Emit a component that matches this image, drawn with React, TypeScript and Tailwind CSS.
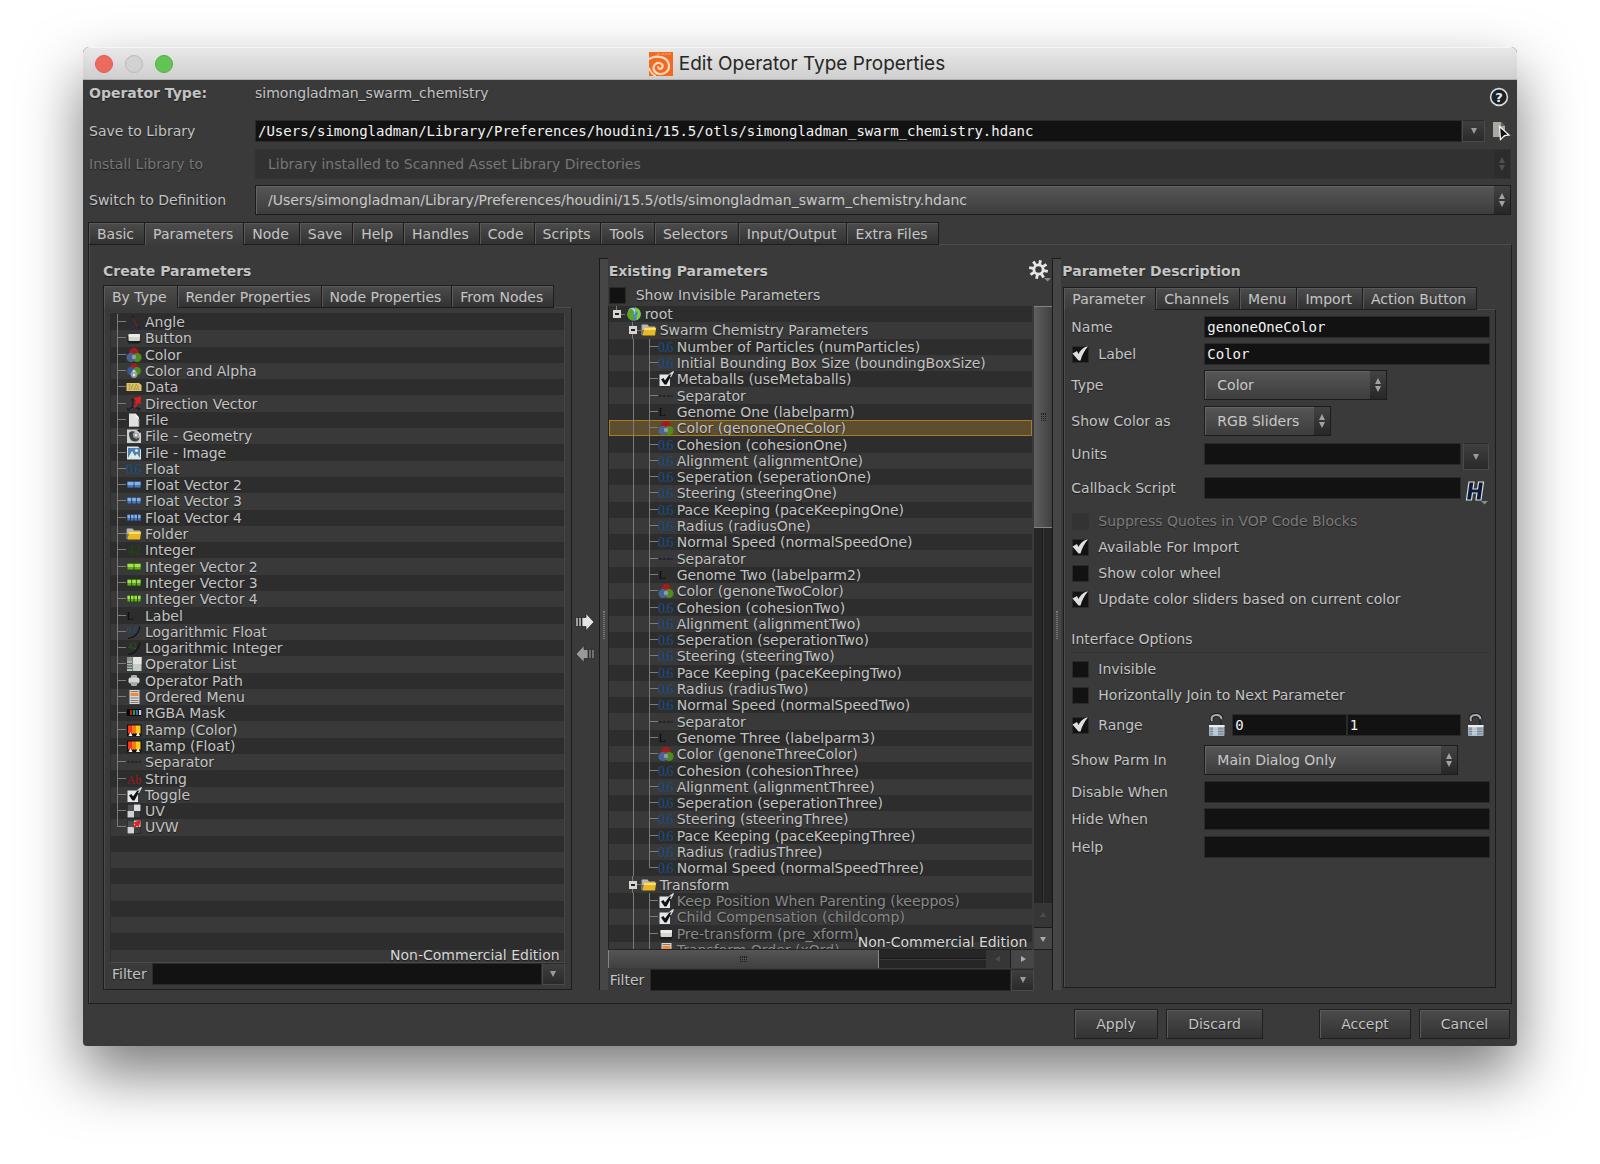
import { useState, type ReactNode } from "react";

type IconName =
  | "angle" | "button" | "color" | "colorAlpha" | "data" | "direction" | "file" | "geometry" | "image"
  | "float" | "float2" | "float3" | "float4" | "folder" | "integer" | "int2" | "int3" | "int4" | "label"
  | "logFloat" | "logInt" | "opList" | "opPath" | "menu" | "rgba" | "ramp" | "separator" | "string"
  | "toggle" | "uv" | "uvw" | "globe";

const serif = "'Liberation Serif', serif";

function cells(count: number, dark: string, mid: string, light: string) {
  const w = 14 / count;
  return (
    <>
      <rect x="1" y="4" width="14" height="7" fill={dark} />
      {Array.from({ length: count }, (_, i) => (
        <g key={i}>
          <rect x={1.5 + i * w} y="4.5" width={w - 1} height="6" fill={mid} />
          <rect x={1.5 + i * w} y="5" width={w - 1} height="3" fill={light} />
        </g>
      ))}
    </>
  );
}

const checkMark = (
  <>
    <rect x="1.5" y="3.5" width="10.5" height="11.5" fill="#e4e6e8" />
    <path d="M3 8.5 L5.5 7 L7 9.5 L12.5 2 L15.5 0.5 L8.5 13.5 L6.5 13.5 Z" fill="#0c1114" />
    <path d="M11.5 3.5 L15.5 0.5 L12.5 6" fill="none" stroke="#dfe3e6" strokeWidth="1.2" />
  </>
);

const checker = (
  <>
    <rect x="1" y="1" width="14" height="14" fill="#16191c" />
    <rect x="1.5" y="1.5" width="6.5" height="6.5" fill="#4b5155" />
    <rect x="8" y="1.5" width="6.5" height="6.5" fill="#dedede" />
    <rect x="1.5" y="8" width="6.5" height="6.5" fill="#d2d2d2" />
    <rect x="8" y="8" width="6.5" height="6.5" fill="#3a3f43" />
  </>
);

const iconArt: Record<IconName, ReactNode> = {
  angle: (
    <>
      <path d="M2 13.5 L6.5 3" stroke="#29294c" strokeWidth="1.2" />
      <path d="M6.5 3.5 L11.5 13" stroke="#7c1f1f" strokeWidth="1.3" />
      <path d="M1.5 13.5 H12" stroke="#29294c" strokeWidth="1.2" strokeDasharray="2 1.5" />
      <path d="M5 4 L7 1 L8.5 4.5 Z M12 11 L15.5 13.5 L12 15.5 Z" fill="#23234a" />
    </>
  ),
  button: (
    <>
      <rect x="1.5" y="4.5" width="13" height="9" rx="2" fill="#1b1b1b" />
      <rect x="2.5" y="4" width="11.5" height="7" rx="1" fill="#d5d5cf" />
      <rect x="2.5" y="4" width="11.5" height="3" rx="1" fill="#ececea" />
    </>
  ),
  color: (
    <>
      <circle cx="8" cy="5.5" r="4.7" fill="#a11d1d" />
      <circle cx="11" cy="10.5" r="4.6" fill="#4e8c1e" />
      <circle cx="5" cy="10.5" r="4.6" fill="#47689c" fillOpacity="0.92" />
      <circle cx="8" cy="10" r="2.2" fill="#a5b3b8" fillOpacity="0.7" />
    </>
  ),
  colorAlpha: (
    <>
      <circle cx="8" cy="4.5" r="4" fill="#a11d1d" />
      <circle cx="11" cy="8" r="3.9" fill="#4e8c1e" />
      <circle cx="5" cy="8" r="3.9" fill="#34588f" />
      <circle cx="8" cy="11.5" r="3.4" fill="#8f9c9f" />
      <circle cx="8" cy="8" r="1.6" fill="#c3cdd1" />
      <circle cx="8" cy="12" r="1.3" fill="#e6eaec" />
    </>
  ),
  data: (
    <>
      <path d="M0.5 4 H13 L15.5 6 V12 H0.5 Z" fill="#dcc566" />
      <path d="M2.5 6 H5 M6 6 H8 M9.5 6 H12 M3 8 H7 M8.5 8 H10 M11 8 H13 M2.5 10 H6 M7.5 10 H13" stroke="#8d792c" strokeWidth="1" strokeDasharray="1.5 .7" />
    </>
  ),
  direction: (
    <>
      <path d="M6.5 11 V3 M6.5 11 L1.5 14 M6.5 11 L14 13" stroke="#1d1d33" strokeWidth="1.4" fill="none" />
      <path d="M5 4.5 L6.5 1.5 L8 4.5 Z M1 11.5 L1 15 L4.5 14.5 Z M12 11 L15 13.5 L11.5 15 Z" fill="#1d1d33" />
      <path d="M8 11.5 L11.5 7.5" stroke="#c3201d" strokeWidth="2.2" />
      <path d="M7.5 2 L15 0.5 L14.5 8.5 L12.5 7 L10.5 8.5 L8.5 6.5 L10 4.5 Z" fill="#de1f1f" />
    </>
  ),
  file: (
    <>
      <path d="M3 1.5 H9.5 L13 5.5 V15 H3 Z" fill="#dfe0e0" />
      <path d="M9.5 1.5 L13 5.5 H9.5 Z" fill="#f7f7f7" />
      <path d="M3.5 14.5 H12.8 V7" fill="none" stroke="#a3a5a5" />
    </>
  ),
  geometry: (
    <>
      <path d="M1 1.5 H12 L15 4.5 V15 H1 Z" fill="#cfd0d0" />
      <path d="M3 5 C3 10 5 13.5 9 13.5 C12 13.5 13.5 11.5 13.5 9 C12 11 8 11 7 8 C6.5 5.5 8 4 10 4 C7 2.5 4 3 3 5 Z" fill="#3a3f42" />
      <circle cx="10" cy="7.5" r="2.8" fill="#8a8f92" />
      <circle cx="10" cy="7" r="1.5" fill="#e7e9ea" />
      <path d="M10.5 2 L14.5 2 L14.5 5.5 Z" fill="#222" />
    </>
  ),
  image: (
    <>
      <path d="M1 1.5 H12 L15 4.5 V14.5 H1 Z" fill="#d8e2ea" />
      <rect x="2" y="3" width="12" height="10" fill="#4d7fb4" />
      <path d="M2 13 L6 6 L9 11 L11 8.5 L14 13 Z" fill="#dcebd9" />
      <circle cx="10.5" cy="5.5" r="1.5" fill="#ecf4fa" />
    </>
  ),
  float: (
    <text x="0 6 8.5" y="12.5" fontSize="14" fontFamily={serif} fill="#184e88">0.6</text>
  ),
  float2: cells(2, "#1e3a60", "#4878ba", "#88afe0"),
  float3: cells(3, "#1e3a60", "#4878ba", "#88afe0"),
  float4: cells(4, "#1e3a60", "#4878ba", "#88afe0"),
  folder: (
    <>
      <path d="M1 2.5 H6.5 L8 4.5 H14 V8 H1 Z" fill="#b9b9b5" />
      <path d="M1 3 V13" stroke="#a8a8a4" />
      <path d="M3 5.5 H15.2 L14 13.5 H1.5 Z" fill="#e8b923" />
      <path d="M3.3 6 H14.8 L14.5 8 H3 Z" fill="#ffe066" />
    </>
  ),
  integer: (
    <text x="1" y="12.5" fontSize="14" fontWeight="bold" fontFamily={serif} fill="#23401a">42</text>
  ),
  int2: cells(2, "#234a0c", "#5fb01c", "#a2e04d"),
  int3: cells(3, "#234a0c", "#5fb01c", "#a2e04d"),
  int4: cells(4, "#234a0c", "#5fb01c", "#a2e04d"),
  label: (
    <text x="0.5" y="12" fontSize="12" fontFamily={serif} fill="#0b0b0b">L</text>
  ),
  logFloat: (
    <>
      <text x="1" y="8.5" fontSize="9" fontFamily={serif} fill="#1a5390">0.6</text>
      <path d="M2 14.5 C9 14 12.5 9 14 2.5" fill="none" stroke="#151515" strokeWidth="1.2" />
    </>
  ),
  logInt: (
    <>
      <text x="2" y="8.5" fontSize="9" fontFamily={serif} fill="#2a5a1c">42</text>
      <path d="M2 14.5 C9 14 12.5 9 14 2.5" fill="none" stroke="#151515" strokeWidth="1.2" />
    </>
  ),
  opList: (
    <>
      <rect x="1" y="1" width="14.5" height="14" fill="#c4cfc6" />
      <rect x="7" y="1" width="8.5" height="7" fill="#e2e6e2" />
      <rect x="1" y="1" width="5" height="4.5" fill="#8c938d" />
      <path d="M1 7.5 H6 M1 10 H6 M1 12.5 H6" stroke="#5c635d" strokeWidth="1.4" />
      <path d="M6.5 1 V15" stroke="#777d78" />
    </>
  ),
  opPath: (
    <>
      <rect x="5" y="2" width="6" height="11" rx="1" fill="#a9ada9" />
      <rect x="2.5" y="4.5" width="11" height="6" rx="2" fill="#d4d7d4" />
      <path d="M3.5 10 H12.5" stroke="#888c89" />
    </>
  ),
  menu: (
    <>
      <rect x="3.5" y="1" width="10" height="14" fill="#d8d8d8" />
      <rect x="4.5" y="3.8" width="8" height="3.2" fill="#f08a34" />
      <path d="M4.5 2.5 H12.5 M4.5 9 H12.5 M4.5 11.5 H12.5 M4.5 13.5 H12.5" stroke="#7c7c7c" />
    </>
  ),
  rgba: (
    <>
      <rect x="1" y="4" width="14.5" height="7" fill="#050505" />
      <rect x="4" y="5" width="2.2" height="5" fill="#c22323" />
      <rect x="7" y="5" width="2.2" height="5" fill="#2f9a2f" />
      <rect x="10" y="5" width="2.2" height="5" fill="#3a62c4" />
      <rect x="13" y="5" width="2.2" height="5" fill="#cfd2d4" />
    </>
  ),
  ramp: (
    <>
      <rect x="1" y="2.5" width="14.5" height="12" fill="#0f0f0f" />
      <rect x="2" y="3.5" width="5" height="8" fill="#f4371c" />
      <rect x="6" y="3.5" width="4" height="8" fill="#fb7a12" />
      <rect x="10" y="3.5" width="4.5" height="8" fill="#fdc91a" />
      <path d="M2.5 14 L4.5 10 L6.5 14 Z M10 14 L12 10 L14 14 Z" fill="#f2f2f2" />
    </>
  ),
  separator: <path d="M1 8 H15" stroke="#1f1f2c" strokeWidth="1.4" strokeDasharray="3 1" />,
  string: (
    <text x="0.5" y="12.5" fontSize="12" fontFamily={serif} fill="#a0161a">Ab</text>
  ),
  toggle: checkMark,
  uv: checker,
  uvw: (
    <>
      {checker}
      <path d="M7 3.5 L14.5 1 L13 8.5 L11 6.8 L8.5 9.5 L7 8 L9.3 5.2 Z" fill="#e02222" />
    </>
  ),
  globe: (
    <>
      <circle cx="8" cy="8" r="6.8" fill="#3f8ccb" />
      <circle cx="6" cy="5.5" r="3.4" fill="#b7dcf3" />
      <path d="M2.5 4.5 C4 3 5 2.5 6 3 L8.5 6 L8 8.5 L6.5 9 L8.5 12 L7 14.7 C3 14 1.2 11 1.2 8 Z" fill="#5fa31f" />
      <path d="M9 1.5 C13 2.5 14.8 5 14.8 8.5 C14.5 12 12 14 10.5 14.3 L10.5 10 L12 7 L9.5 4.5 Z" fill="#86cc35" />
    </>
  ),
};

function Icon({ name }: { name: IconName }) {
  return (
    <svg viewBox="0 0 16 16" className="h-4 w-4 shrink-0 [text-shadow:none]" fill="none" aria-hidden="true">
      {iconArt[name]}
    </svg>
  );
}

const createTypes: [IconName, string][] = [
  ["angle", "Angle"], ["button", "Button"], ["color", "Color"], ["colorAlpha", "Color and Alpha"],
  ["data", "Data"], ["direction", "Direction Vector"], ["file", "File"], ["geometry", "File - Geometry"],
  ["image", "File - Image"], ["float", "Float"], ["float2", "Float Vector 2"], ["float3", "Float Vector 3"],
  ["float4", "Float Vector 4"], ["folder", "Folder"], ["integer", "Integer"], ["int2", "Integer Vector 2"],
  ["int3", "Integer Vector 3"], ["int4", "Integer Vector 4"], ["label", "Label"],
  ["logFloat", "Logarithmic Float"], ["logInt", "Logarithmic Integer"], ["opList", "Operator List"],
  ["opPath", "Operator Path"], ["menu", "Ordered Menu"], ["rgba", "RGBA Mask"], ["ramp", "Ramp (Color)"],
  ["ramp", "Ramp (Float)"], ["separator", "Separator"], ["string", "String"], ["toggle", "Toggle"],
  ["uv", "UV"], ["uvw", "UVW"],
];

type Node = { depth: 0 | 1 | 2; icon: IconName; text: string; dim?: boolean; last?: boolean };

function genome(n: string, label: string): Node[] {
  const items: [IconName, string][] = [
    ["separator", "Separator"],
    ["label", `Genome ${n} (${label})`],
    ["color", `Color (genone${n}Color)`],
    ["float", `Cohesion (cohesion${n})`],
    ["float", `Alignment (alignment${n})`],
    ["float", `Seperation (seperation${n})`],
    ["float", `Steering (steering${n})`],
    ["float", `Pace Keeping (paceKeeping${n})`],
    ["float", `Radius (radius${n})`],
    ["float", `Normal Speed (normalSpeed${n})`],
  ];
  return items.map(([icon, text], i) => ({ depth: 2, icon, text, last: n === "Three" && i === 9 }));
}

const existing: Node[] = [
  { depth: 0, icon: "globe", text: "root" },
  { depth: 1, icon: "folder", text: "Swarm Chemistry Parameters" },
  { depth: 2, icon: "float", text: "Number of Particles (numParticles)" },
  { depth: 2, icon: "float", text: "Initial Bounding Box Size (boundingBoxSize)" },
  { depth: 2, icon: "toggle", text: "Metaballs (useMetaballs)" },
  ...genome("One", "labelparm"),
  ...genome("Two", "labelparm2"),
  ...genome("Three", "labelparm3"),
  { depth: 1, icon: "folder", text: "Transform" },
  { depth: 2, icon: "toggle", text: "Keep Position When Parenting (keeppos)", dim: true },
  { depth: 2, icon: "toggle", text: "Child Compensation (childcomp)", dim: true },
  { depth: 2, icon: "button", text: "Pre-transform (pre_xform)", dim: true },
  { depth: 2, icon: "menu", text: "Transform Order (xOrd)", dim: true },
];

function Branch({ last }: { last?: boolean }) {
  return (
    <span className="flex h-full w-[9px] shrink-0 flex-col">
      <span className="h-1/2 border-b border-l border-[#7b7b7b]" />
      <span className={last ? "h-1/2" : "h-1/2 border-l border-[#7b7b7b]"} />
    </span>
  );
}

function Expander({ root }: { root?: boolean }) {
  return (
    <span className="flex h-full w-3 shrink-0 items-center">
      <span className="flex h-full w-2 flex-col items-center">
        <span className="w-px flex-1 bg-[#7b7b7b]" />
        <span className="flex h-2 w-2 items-center justify-center bg-[#d6d6d0]">
          <span className="h-0.5 w-1 bg-[#222]" />
        </span>
        <span className={root ? "w-px flex-1" : "w-px flex-1 bg-[#7b7b7b]"} />
      </span>
      <span className="h-px w-1 bg-[#7b7b7b]" />
    </span>
  );
}

const rowShade = "odd:bg-[#2d2d2d] even:bg-[#393939]";

function ExistingRow({ node, selected, onSelect }: { node: Node; selected: boolean; onSelect: () => void }) {
  return (
    <li
      onClick={onSelect}
      className={`flex min-h-0 items-center whitespace-nowrap ${
        selected ? "bg-[#5e4e30] outline -outline-offset-1 outline-[#a87b26]" : rowShade
      }`}
    >
      {node.depth === 0 && <span className="w-1 shrink-0" />}
      {node.depth === 1 && <span className="w-5 shrink-0" />}
      {node.depth === 2 && (
        <>
          <span className="w-6 shrink-0" />
          <span className="h-full w-4 shrink-0 border-l border-[#7b7b7b]" />
        </>
      )}
      {node.depth === 2 ? <Branch last={node.last} /> : <Expander root={node.depth === 0} />}
      {node.depth === 0 && <span className="w-px shrink-0" />}
      <Icon name={node.icon} />
      <span className={`pl-[3px] leading-4 ${node.dim ? "text-[#8a8a8a]" : ""}`}>{node.text}</span>
    </li>
  );
}

function Tabs({ items, initial }: { items: string[]; initial: number }) {
  const [active, setActive] = useState(initial);
  return (
    <div role="tablist" className="relative z-10 -mb-px flex border-l border-[#1d1d1d]">
      {items.map((t, i) => (
        <button
          key={t}
          role="tab"
          aria-selected={i === active}
          onClick={() => setActive(i)}
          className={`h-[23px] whitespace-nowrap border-r border-t border-r-[#1d1d1d] border-t-[#1d1d1d] bg-linear-to-b pl-2 pr-[10px] leading-5 shadow-[inset_1px_1px_0_#595959] ${
            i === active
              ? "from-[#4c4c4c] to-[#3b3b3b]"
              : "border-b border-b-[#1d1d1d] from-[#4c4c4c] to-[#323232]"
          }`}
        >
          {t}
        </button>
      ))}
    </div>
  );
}

const frame = "border border-b-[#1d1d1d] border-l-[#1d1d1d] border-r-[#1d1d1d] border-t-[#4c4c4c] shadow-[inset_1px_0_0_#4c4c4c]";
const field =
  "h-[22px] min-w-0 bg-[#121212] px-[3px] leading-[22px] shadow-[inset_0_0_0_1px_#2a2a2a] font-['DejaVu_Sans_Mono',monospace] text-[14px] text-[#f2f2f2] outline-none";

function DropButton({ label, tall }: { label: string; tall?: boolean }) {
  return (
    <button
      aria-label={label}
      className={`flex shrink-0 items-center justify-center border border-[#4a4a4a] border-t-[#2a2a2a] bg-linear-to-b from-[#3f3f3f] to-[#2a2a2a] ${
        tall ? "h-[27px] w-[26px]" : "h-[22px] w-[23px]"
      }`}
    >
      <svg viewBox="0 0 8 8" className="h-2 w-2" aria-hidden="true">
        <path d="M1 1 H7 L4 7 Z" fill="#9a9a9a" />
      </svg>
    </button>
  );
}

function Select({ id, value, width, disabled }: { id: string; value: string; width: string; disabled?: boolean }) {
  return (
    <div className={`relative h-[30px] ${width}`}>
      <select
        id={id}
        disabled={disabled}
        className={`h-full w-full appearance-none truncate border pl-3 pr-6 outline-none ${
          disabled
            ? "border-[#333] bg-[#313131] text-[#777] opacity-100"
            : "border-[#1c1c1c] bg-linear-to-b from-[#565656] to-[#3d3d3d] text-[#c8c8c8] shadow-[inset_1px_1px_0_#646464]"
        }`}
      >
        <option>{value}</option>
      </select>
      <span
        className={`pointer-events-none absolute inset-y-px right-px flex w-4 items-center justify-center ${
          disabled ? "bg-[#2c2c2c]" : "bg-linear-to-b from-[#434343] to-[#272727]"
        }`}
      >
        <svg viewBox="0 0 8 16" className="h-4 w-2" aria-hidden="true">
          <path d="M4 1 L7 7 H1 Z M1 9 H7 L4 15 Z" fill={disabled ? "#505050" : "#a2a2a2"} />
        </svg>
      </span>
    </div>
  );
}

function Check({ id, label, checked, disabled }: { id: string; label: string; checked?: boolean; disabled?: boolean }) {
  return (
    <div className="flex items-center">
      <span className="grid h-[18px] w-[18px] shrink-0 place-items-center">
        <input
          id={id}
          type="checkbox"
          defaultChecked={checked}
          disabled={disabled}
          className="peer col-start-1 row-start-1 h-[17px] w-[17px] appearance-none border border-[#2a2a2a] bg-[#121212] disabled:border-[#343434] disabled:bg-[#333]"
        />
        <svg viewBox="0 0 18 18" className="pointer-events-none invisible col-start-1 row-start-1 h-[18px] w-[18px] peer-checked:visible" aria-hidden="true">
          <path d="M1.5 8.5 L6 6 L7.5 9 C9.5 5 12.5 2 17 1.5 C13.5 5.5 11 10 9.5 15.5 H7.5 Z" fill="#dedede" />
        </svg>
      </span>
      <label htmlFor={id} className={`whitespace-nowrap pl-[9px] ${disabled ? "text-[#7b7b7b]" : ""}`}>
        {label}
      </label>
    </div>
  );
}

function Row({ id, label, className, children }: { id: string; label: string; className?: string; children: ReactNode }) {
  return (
    <div className={`flex items-center ${className ?? ""}`}>
      <label htmlFor={id} className="w-[133px] shrink-0">{label}</label>
      {children}
    </div>
  );
}

function Splitter() {
  return (
    <div className="flex w-[9px] shrink-0 items-center justify-center border-l border-t border-[#1a1a1a] bg-[#464646]">
      <div className="h-7 w-0.5 border-x border-dotted border-[#777]" />
    </div>
  );
}

function Lock({ label }: { label: string }) {
  return (
    <button aria-label={label} className="shrink-0">
      <svg viewBox="0 0 18 24" className="h-6 w-[18px]" aria-hidden="true">
        <path d="M4 8 C2.5 4 5 2 8.5 2 C12 2 13.5 4 13.5 6.5" fill="none" stroke="#1b1b1b" strokeWidth="4" />
        <path d="M4 8 C2.5 4 5 2 8.5 2 C12 2 13.5 4 13.5 6.5" fill="none" stroke="#a3adb6" strokeWidth="2" />
        <path d="M13 6 V12" stroke="#1b1b1b" strokeWidth="1" />
        <rect x="1" y="12" width="15.5" height="11" rx="1" fill="#a3b0bd" />
        <rect x="1" y="12" width="15.5" height="2" fill="#e9eef2" />
        <path d="M2 16 H15.5 M2 18.5 H15.5 M2 21 H15.5" stroke="#76838f" />
        <rect x="5" y="14" width="5" height="8.5" fill="#dbe4ec" fillOpacity="0.6" />
      </svg>
    </button>
  );
}

function FilterRow({ id }: { id: string }) {
  return (
    <div className="flex items-center">
      <label htmlFor={id} className="w-[42px] shrink-0 pl-0.5">Filter</label>
      <input id={id} className={`${field} flex-1`} />
      <DropButton label="Filter history" />
    </div>
  );
}

const teeth = [0, 45, 90, 135, 180, 225, 270, 315];
const dialogButton =
  "h-[30px] border border-[#1f1f1f] bg-linear-to-b from-[#4b4b4b] to-[#333] shadow-[inset_1px_1px_0_#5a5a5a] [text-shadow:inherit]";
const scrollButton = "flex items-center justify-center border-[#1c1c1c]";

export default function App() {
  const [selected, setSelected] = useState(7);

  return (
    <div className="flex h-screen min-h-[1000px] bg-white px-[83px] pb-[118px] pt-[47px] font-['DejaVu_Sans',sans-serif] text-[14px] leading-5 text-[#c4c4c4]">
      <div className="flex min-w-0 flex-1 flex-col overflow-hidden rounded-t-md rounded-b-sm bg-[#3a3a3a] shadow-[0_28px_60px_rgba(0,0,0,0.52)]">
        <header className="flex h-[33px] shrink-0 items-center border-b border-t border-b-[#b0b0b0] border-t-[#f6f6f6] bg-linear-to-b from-[#e8e8e8] to-[#cfcfcf] pl-3 pr-[18px]">
          <div className="flex flex-1 gap-3">
            <button aria-label="Close" className="h-[18px] w-[18px] rounded-full border border-[#dc5a50] bg-[#ee6a5f]" />
            <button aria-label="Minimize" className="h-[18px] w-[18px] rounded-full border border-[#bababa] bg-[#d2d2d2]" />
            <button aria-label="Zoom" className="h-[18px] w-[18px] rounded-full border border-[#4fae41] bg-[#61c454]" />
          </div>
          <h1 className="flex items-center gap-[6px] font-['Inter',sans-serif] text-[19px] text-[#262626]">
            <svg viewBox="0 0 24 24" className="h-6 w-6" aria-hidden="true">
              <rect width="24" height="24" fill="#f26a21" />
              <path d="M0 7 C7 3 19 4 20 13.5 C20.5 19 15.5 22.5 10.5 22 C4.5 21 3 15.5 6 12.5 C9 9.5 14.5 11.5 13.5 15 C12.5 18 8.5 17 9.5 14.5" fill="none" stroke="#fbd9c3" strokeWidth="2.2" />
              <path d="M0 16 C2 21 4 23 7 24" fill="none" stroke="#fbd9c3" strokeWidth="1.8" />
              <path d="M8 2 H11 M12.5 2 H22" stroke="#f79a63" strokeWidth="1.4" strokeDasharray="2.5 .8" />
            </svg>
            Edit Operator Type Properties
          </h1>
          <div className="flex-1" />
        </header>

        <div className="flex min-h-0 flex-1 flex-col px-[6px] [text-shadow:0_1px_1px_#1c1c1c]">
          <div className="flex h-[26px] items-center">
            <span className="w-[166px] shrink-0 font-bold">Operator Type:</span>
            <span className="flex-1">simongladman_swarm_chemistry</span>
            <button aria-label="Help" className="mr-0.5 mt-2">
              <svg viewBox="0 0 20 20" className="h-5 w-5" aria-hidden="true">
                <circle cx="10" cy="10" r="8.4" fill="#1a2328" stroke="#dadada" strokeWidth="1.6" />
                <text x="10" y="14.5" textAnchor="middle" fontSize="13" fontWeight="bold" fill="#ededed">?</text>
              </svg>
            </button>
          </div>
          <div className="mt-3.5 flex items-center">
            <label htmlFor="save" className="w-[166px] shrink-0">Save to Library</label>
            <input id="save" className={`${field} flex-1`} defaultValue="/Users/simongladman/Library/Preferences/houdini/15.5/otls/simongladman_swarm_chemistry.hdanc" />
            <DropButton label="Recent libraries" />
            <button aria-label="Choose file" className="ml-[7px]">
              <svg viewBox="0 0 19 20" className="h-5 w-[19px]" aria-hidden="true">
                <path d="M1 1 H9 L13 5 V16 H1 Z" fill="#a9a9a3" />
                <path d="M9 1 L13 5 H9 Z" fill="#5d5d59" />
                <path d="M7.5 5.5 L17 14 L12.5 14.5 L8.5 18.5 Z" fill="#0c0c0c" stroke="#efefef" strokeWidth="1.3" />
              </svg>
            </button>
          </div>
          <div className="mt-[7px] flex items-center">
            <label htmlFor="install" className="w-[166px] shrink-0 text-[#777]">Install Library to</label>
            <Select id="install" disabled width="flex-1" value="Library installed to Scanned Asset Library Directories" />
          </div>
          <div className="mt-[6px] flex items-center">
            <label htmlFor="switch" className="w-[166px] shrink-0">Switch to Definition</label>
            <Select id="switch" width="flex-1" value="/Users/simongladman/Library/Preferences/houdini/15.5/otls/simongladman_swarm_chemistry.hdanc" />
          </div>

          <div className="-ml-px mt-[7px] flex">
            <Tabs
              initial={1}
              items={["Basic", "Parameters", "Node", "Save", "Help", "Handles", "Code", "Scripts", "Tools", "Selectors", "Input/Output", "Extra Files"]}
            />
          </div>
          <main className={`${frame} -mx-px flex min-h-0 flex-1 py-[13px] pl-[14px] pr-[15px]`}>
            <section className="flex min-w-0 flex-[469] flex-col">
              <h2 className="h-[27px] font-bold leading-[26px]">Create Parameters</h2>
              <div className="flex">
                <Tabs initial={0} items={["By Type", "Render Properties", "Node Properties", "From Nodes"]} />
              </div>
              <div className={`${frame} flex min-h-0 flex-1 flex-col px-[6px] pb-1 pt-[5px]`}>
                <div className="relative min-h-0 flex-1 overflow-hidden border border-[#2e2e2e] border-b-[#4a4a4a] border-r-[#464646]">
                  <ul className="grid h-[652px] auto-rows-fr">
                    {createTypes.map(([icon, text], i) => (
                      <li key={text} className={`flex min-h-0 items-center whitespace-nowrap pl-[6px] ${rowShade}`}>
                        <Branch last={i === createTypes.length - 1} />
                        <Icon name={icon} />
                        <span className="pl-[3px] leading-4">{text}</span>
                      </li>
                    ))}
                    {Array.from({ length: 8 }, (_, i) => (
                      <li key={i} aria-hidden="true" className={rowShade} />
                    ))}
                  </ul>
                  <span className="absolute bottom-0 right-1 leading-[14px] text-[#d8d8d8]">Non-Commercial Edition</span>
                </div>
                <FilterRow id="filter-types" />
              </div>
            </section>

            <div className="flex w-[27px] shrink-0 flex-col items-center justify-center gap-3 pt-7">
              <button aria-label="Add parameter">
                <svg viewBox="0 0 20 20" className="h-5 w-5" aria-hidden="true">
                  <path d="M1 5.5 H3 V14.5 H1 Z M4 5.5 H6 V14.5 H4 Z M7 5.5 H11 V1.5 L19 10 L11 18.5 V14.5 H7 Z" fill="#e4e4e4" stroke="#1c1c1c" strokeWidth=".7" />
                </svg>
              </button>
              <button aria-label="Remove parameter">
                <svg viewBox="0 0 20 20" className="h-5 w-5" aria-hidden="true">
                  <path d="M19 5.5 H17 V14.5 H19 Z M16 5.5 H14 V14.5 H16 Z M13 5.5 H9 V1.5 L1 10 L9 18.5 V14.5 H13 Z" fill="#999" stroke="#252525" strokeWidth=".7" />
                </svg>
              </button>
            </div>

            <Splitter />

            <section className="flex min-w-0 flex-[445] flex-col">
              <div className="mb-px flex h-[26px] items-center justify-between pl-px">
                <h2 className="font-bold">Existing Parameters</h2>
                <button aria-label="Parameter actions">
                  <svg viewBox="0 0 24 24" className="h-6 w-6" aria-hidden="true">
                    {teeth.map((a) => (
                      <path key={a} d="M10.5 5.5 V1" stroke="#e6e6e6" strokeWidth="2.8" transform={`rotate(${a + 12} 10.5 10.5)`} />
                    ))}
                    <circle cx="10.5" cy="10.5" r="4.6" fill="none" stroke="#e6e6e6" strokeWidth="2.8" />
                    <path d="M16 19 H23 L19.5 22.5 Z" fill="#8a8a8a" />
                  </svg>
                </button>
              </div>
              <div className="pb-px pl-px">
                <Check id="show-invisible" label="Show Invisible Parameters" />
              </div>
              <div className="flex min-h-0 flex-1">
                <div className="relative min-w-0 flex-1 overflow-hidden border-b border-l border-[#222]">
                  <ul className="grid h-[652px] auto-rows-fr">
                    {existing.map((n, i) => (
                      <ExistingRow key={i} node={n} selected={i === selected} onSelect={() => setSelected(i)} />
                    ))}
                  </ul>
                  <span className="absolute bottom-0 right-[5px] leading-[14px] text-[#d8d8d8]">Non-Commercial Edition</span>
                </div>
                <div className="flex w-5 shrink-0 flex-col border-l-2 border-[#3a3a3a] bg-[#262626]">
                  <div className="flex flex-[221] items-center justify-center border-b border-t border-[#858585] bg-linear-to-r from-[#606060] to-[#404040]">
                    <div className="flex gap-px">
                      {[0, 1, 2].map((c) => <div key={c} className="h-2 border-l border-dotted border-[#1c1c1c]" />)}
                    </div>
                  </div>
                  <div className="flex flex-[376] justify-center">
                    <div className="w-0.5 border-l border-[#1a1a1a] bg-[#383838]" />
                  </div>
                  <button aria-label="Scroll up" className={`${scrollButton} h-6 bg-[#363636]`}>
                    <svg viewBox="0 0 6 6" className="h-[6px] w-[6px]" aria-hidden="true"><path d="M3 0 L6 5 H0 Z" fill="#4c4c4c" /></svg>
                  </button>
                  <button aria-label="Scroll down" className={`${scrollButton} h-[23px] border-y bg-[#464646]`}>
                    <svg viewBox="0 0 6 6" className="h-[6px] w-[6px]" aria-hidden="true"><path d="M0 1 H6 L3 6 Z" fill="#aaa" /></svg>
                  </button>
                </div>
              </div>
              <div className="mr-[18px] flex h-[18px] bg-[#262626]">
                <div className="flex flex-[271] items-center justify-center border-x border-[#858585] bg-linear-to-b from-[#555] to-[#404040]">
                  <div className="flex gap-px">
                    {[0, 1, 2, 3].map((c) => <div key={c} className="h-[6px] border-l border-dotted border-[#1c1c1c]" />)}
                  </div>
                </div>
                <div className="flex flex-[108] items-center">
                  <div className="h-0.5 w-full border-t border-[#1a1a1a] bg-[#3a3a3a]" />
                </div>
                <button aria-label="Scroll left" className={`${scrollButton} w-6 bg-[#363636]`}>
                  <svg viewBox="0 0 6 6" className="h-[6px] w-[6px]" aria-hidden="true"><path d="M5 0 V6 L0 3 Z" fill="#4c4c4c" /></svg>
                </button>
                <button aria-label="Scroll right" className={`${scrollButton} w-6 border-l bg-[#464646]`}>
                  <svg viewBox="0 0 6 6" className="h-[6px] w-[6px]" aria-hidden="true"><path d="M1 0 V6 L6 3 Z" fill="#aaa" /></svg>
                </button>
              </div>
              <div className="-mb-px mr-[18px] mt-px">
                <FilterRow id="filter-existing" />
              </div>
            </section>

            <Splitter />

            <section className="flex min-w-0 flex-[434] flex-col pl-px">
              <h2 className="mb-[3px] h-[26px] font-bold leading-[26px]">Parameter Description</h2>
              <div className="ml-px flex">
                <Tabs initial={0} items={["Parameter", "Channels", "Menu", "Import", "Action Button"]} />
              </div>
              <div className={`${frame} mb-0.5 ml-px min-h-0 flex-1 pl-[7px] pr-[5px] pt-[6px]`}>
                <Row id="name" label="Name">
                  <input id="name" className={`${field} flex-1`} defaultValue="genoneOneColor" />
                </Row>
                <div className="mt-[5px] flex items-center">
                  <div className="w-[133px] shrink-0"><Check id="label-on" label="Label" checked /></div>
                  <input aria-label="Label text" className={`${field} flex-1`} defaultValue="Color" />
                </div>
                <Row id="type" label="Type" className="mt-[5px]">
                  <Select id="type" width="w-[183px]" value="Color" />
                </Row>
                <Row id="show-as" label="Show Color as" className="mt-[6px]">
                  <Select id="show-as" width="w-[127px]" value="RGB Sliders" />
                </Row>
                <Row id="units" label="Units" className="mt-[7px] h-[22px]">
                  <input id="units" className={`${field} flex-1`} />
                  <div className="ml-0.5 mr-px mt-[5px]"><DropButton label="Units presets" tall /></div>
                </Row>
                <Row id="callback" label="Callback Script" className="mt-3 h-[22px]">
                  <input id="callback" className={`${field} flex-1`} />
                  <button aria-label="Script language" className="ml-1 mt-2 w-[25px]">
                    <svg viewBox="0 0 25 26" className="h-[26px] w-[25px]" aria-hidden="true">
                      <path d="M4 3 H9 L8 10 H12.5 L13.5 3 H18.5 L16 21 H11 L12 14 H7.5 L6.5 21 H1.5 Z" fill="#0a1c3e" stroke="#dedede" strokeWidth="1.2" />
                      <path d="M16 22 H23 L19.5 25.5 Z" fill="#8a8a8a" />
                    </svg>
                  </button>
                </Row>
                <div className="mt-[9px] grid auto-rows-[26px] items-center">
                  <Check id="suppress" label="Suppress Quotes in VOP Code Blocks" disabled />
                  <Check id="available" label="Available For Import" checked />
                  <Check id="wheel" label="Show color wheel" />
                  <Check id="sliders" label="Update color sliders based on current color" checked />
                </div>
                <h3 className="mb-[3px] mt-[15px] h-[26px] border-b border-[#333] leading-6">Interface Options</h3>
                <div className="grid auto-rows-[26px] items-center">
                  <Check id="invisible" label="Invisible" />
                  <Check id="join" label="Horizontally Join to Next Parameter" />
                </div>
                <div className="mt-[6px] flex h-[22px] items-center">
                  <div className="w-[137px] shrink-0"><Check id="range" label="Range" checked /></div>
                  <Lock label="Lock minimum" />
                  <input aria-label="Range minimum" className={`${field} ml-[6px] flex-1`} defaultValue="0" />
                  <input aria-label="Range maximum" className={`${field} flex-1`} defaultValue="1" />
                  <div className="flex w-[29px] justify-center"><Lock label="Lock maximum" /></div>
                </div>
                <Row id="show-in" label="Show Parm In" className="mt-[9px]">
                  <Select id="show-in" width="w-[254px]" value="Main Dialog Only" />
                </Row>
                <Row id="disable" label="Disable When" className="mt-[6px]">
                  <input id="disable" className={`${field} flex-1`} />
                </Row>
                <Row id="hide" label="Hide When" className="mt-[5px]">
                  <input id="hide" className={`${field} flex-1`} />
                </Row>
                <Row id="help" label="Help" className="mt-[6px]">
                  <input id="help" className={`${field} flex-1`} />
                </Row>
              </div>
            </section>
          </main>

          <footer className="flex h-[42px] shrink-0 items-start justify-end gap-2 pr-px pt-[5px]">
            <button className={`${dialogButton} w-[84px]`}>Apply</button>
            <button className={`${dialogButton} mr-12 w-[97px]`}>Discard</button>
            <button className={`${dialogButton} w-[92px]`}>Accept</button>
            <button className={`${dialogButton} w-[91px]`}>Cancel</button>
          </footer>
        </div>
      </div>
    </div>
  );
}
